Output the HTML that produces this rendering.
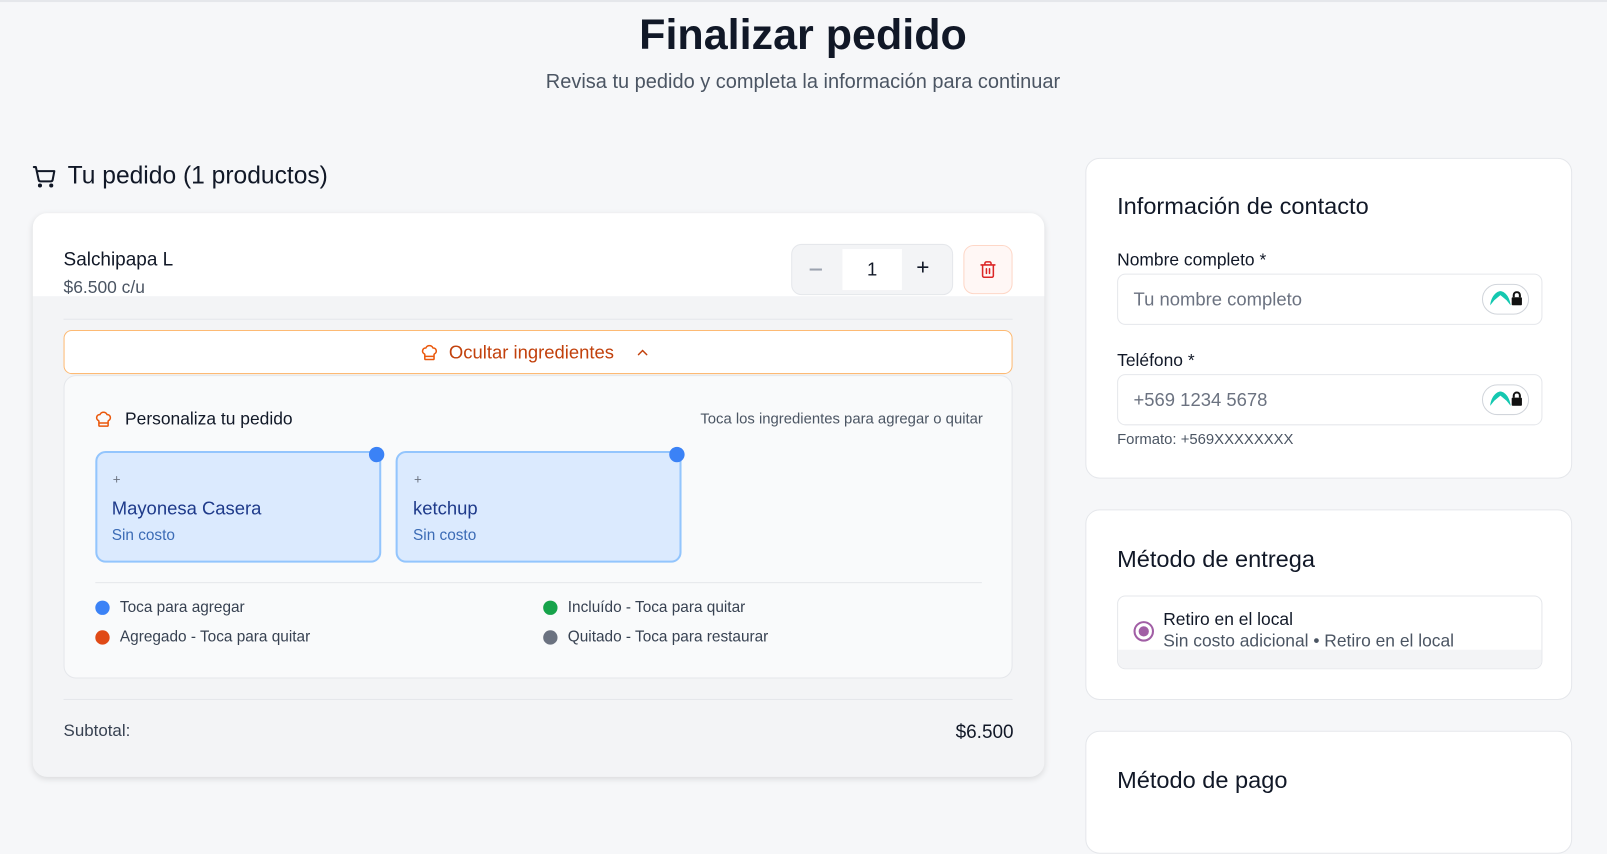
<!DOCTYPE html>
<html><head><meta charset="utf-8"><style>
*{box-sizing:border-box;margin:0;padding:0}
html,body{width:1607px;height:791px;overflow:hidden;background:#f6f7f9}
body{font-family:"Liberation Sans",sans-serif;color:#111827}
#w{position:absolute;left:0;top:0;width:1568px;height:772px;transform:scale(1.02487);transform-origin:0 0}
.a{position:absolute;white-space:nowrap}
.card{position:absolute;background:#fff;border:1px solid #e5e7eb;border-radius:14px}
</style></head><body><div id="w">
<div class="a" style="left:0;top:0;width:1568px;height:2px;background:#e5e7eb"></div>
<div class="a" style="left:0;width:1567px;top:10px;text-align:center;font-size:42px;font-weight:bold;color:#111827">Finalizar pedido</div>
<div class="a" style="left:0;width:1567px;top:69px;text-align:center;font-size:19.5px;color:#4b5563">Revisa tu pedido y completa la información para continuar</div>

<svg class="a" style="left:31px;top:160px" width="24" height="24" viewBox="0 0 24 24" fill="none" stroke="#111827" stroke-width="2" stroke-linecap="round" stroke-linejoin="round"><circle cx="8" cy="21" r="1"/><circle cx="19" cy="21" r="1"/><path d="M2 3h2l2.7 12.4a2 2 0 0 0 2 1.6h9.7a2 2 0 0 0 2-1.6L22 7H5.1"/></svg>
<div class="a" style="left:66px;top:158px;font-size:24px">Tu pedido (1 productos)</div>

<div class="a" style="left:32px;top:208px;width:987px;height:550px;border-radius:14px;background:#f3f4f6;box-shadow:0 2px 6px rgba(0,0,0,.12);overflow:hidden">
  <div class="a" style="left:0;top:0;width:987px;height:81px;background:#fff"></div>
  <div class="a" style="left:30px;top:34px;font-size:18.5px">Salchipapa L</div>
  <div class="a" style="left:30px;top:63px;font-size:17px;color:#4b5563">$6.500 c/u</div>
  <div class="a" style="left:740px;top:30px;width:158px;height:50px;border:1px solid #e5e7eb;border-radius:10px;background:#f3f4f6"></div>
  <div class="a" style="left:790px;top:35px;width:58px;height:40px;background:#fff"></div>
  <div class="a" style="left:758px;top:54px;width:12px;height:1.5px;background:#9ca3af"></div>
  <div class="a" style="left:790px;top:45px;width:58px;text-align:center;font-size:18px">1</div>
  <div class="a" style="left:862px;top:40px;font-size:22px;color:#111827">+</div>
  <div class="a" style="left:908px;top:31px;width:48px;height:48px;border:1px solid #fed7c7;border-radius:10px;background:#fff7f5"></div>
  <svg class="a" style="left:923px;top:46px" width="18" height="18" viewBox="0 0 24 24" fill="none" stroke="#dc2626" stroke-width="2" stroke-linecap="round"><path d="M3 6h18M19 6v14a2 2 0 0 1-2 2H7a2 2 0 0 1-2-2V6M8 6V4a2 2 0 0 1 2-2h4a2 2 0 0 1 2 2v2M10 11v6M14 11v6"/></svg>
  <div class="a" style="left:30px;top:103px;width:926px;height:1px;background:#e5e7eb"></div>
  <div class="a" style="left:30px;top:114px;width:926px;height:43px;border:1px solid #fdba74;border-radius:8px;background:#fff"></div>
  <svg class="a" style="left:378px;top:127px" width="18" height="18" viewBox="0 0 24 24" fill="none" stroke="#ea580c" stroke-width="2" stroke-linecap="round" stroke-linejoin="round"><path d="M17 21a1 1 0 0 0 1-1v-5.35c0-.46.31-.85.74-1.04a4 4 0 0 0-2.13-7.55 5 5 0 0 0-9.22 0 4 4 0 0 0-2.13 7.55c.43.19.74.58.74 1.04V20a1 1 0 0 0 1 1zM6 17h12"/></svg>
  <div class="a" style="left:406px;top:126px;font-size:18px;color:#c2410c">Ocultar ingredientes</div>
  <svg class="a" style="left:587px;top:128px" width="16" height="16" viewBox="0 0 24 24" fill="none" stroke="#c2410c" stroke-width="2.2" stroke-linecap="round"><path d="M6 15l6-6 6 6"/></svg>
  <div class="a" style="left:30px;top:158px;width:926px;height:296px;border:1px solid #e5e7eb;border-radius:12px;background:#f9fafb"></div>
  <svg class="a" style="left:60px;top:192px" width="18" height="18" viewBox="0 0 24 24" fill="none" stroke="#ea580c" stroke-width="2" stroke-linecap="round" stroke-linejoin="round"><path d="M17 21a1 1 0 0 0 1-1v-5.35c0-.46.31-.85.74-1.04a4 4 0 0 0-2.13-7.55 5 5 0 0 0-9.22 0 4 4 0 0 0-2.13 7.55c.43.19.74.58.74 1.04V20a1 1 0 0 0 1 1zM6 17h12"/></svg>
  <div class="a" style="left:90px;top:191px;font-size:17px">Personaliza tu pedido</div>
  <div class="a" style="right:60px;top:193px;font-size:14.5px;color:#4b5563">Toca los ingredientes para agregar o quitar</div>
  <div class="a" style="left:61px;top:232px;width:279px;height:109px;border:2px solid #93c5fd;border-radius:10px;background:#dbeafe"></div>
  <div class="a" style="left:328px;top:228px;width:15px;height:15px;border-radius:50%;background:#3b82f6"></div>
  <div class="a" style="left:78px;top:252px;font-size:13px;color:#6b7280">+</div>
  <div class="a" style="left:77px;top:278px;font-size:18px;color:#1e3a8a">Mayonesa Casera</div>
  <div class="a" style="left:77px;top:306px;font-size:15px;color:#3b6bb5">Sin costo</div>
  <div class="a" style="left:354px;top:232px;width:279px;height:109px;border:2px solid #93c5fd;border-radius:10px;background:#dbeafe"></div>
  <div class="a" style="left:621px;top:228px;width:15px;height:15px;border-radius:50%;background:#3b82f6"></div>
  <div class="a" style="left:372px;top:252px;font-size:13px;color:#6b7280">+</div>
  <div class="a" style="left:371px;top:278px;font-size:18px;color:#1e3a8a">ketchup</div>
  <div class="a" style="left:371px;top:306px;font-size:15px;color:#3b6bb5">Sin costo</div>
  <div class="a" style="left:61px;top:360px;width:865px;height:1px;background:#e5e7eb"></div>
  <div class="a" style="left:61px;top:378px;width:14px;height:14px;border-radius:50%;background:#3b82f6"></div>
  <div class="a" style="left:85px;top:376px;font-size:15px;color:#374151">Toca para agregar</div>
  <div class="a" style="left:61px;top:407px;width:14px;height:14px;border-radius:50%;background:#e04a16"></div>
  <div class="a" style="left:85px;top:405px;font-size:15px;color:#374151">Agregado - Toca para quitar</div>
  <div class="a" style="left:498px;top:378px;width:14px;height:14px;border-radius:50%;background:#16a34a"></div>
  <div class="a" style="left:522px;top:376px;font-size:15px;color:#374151">Incluído - Toca para quitar</div>
  <div class="a" style="left:498px;top:407px;width:14px;height:14px;border-radius:50%;background:#6b7280"></div>
  <div class="a" style="left:522px;top:405px;font-size:15px;color:#374151">Quitado - Toca para restaurar</div>
  <div class="a" style="left:30px;top:474px;width:926px;height:1px;background:#e5e7eb"></div>
  <div class="a" style="left:30px;top:496px;font-size:16.5px;color:#374151">Subtotal:</div>
  <div class="a" style="right:30px;top:495px;font-size:18.5px;color:#111827">$6.500</div>
</div>

<div class="card" style="left:1059px;top:154px;width:475px;height:313px">
  <div class="a" style="left:30px;top:33px;font-size:23px">Información de contacto</div>
  <div class="a" style="left:30px;top:89px;font-size:17px">Nombre completo *</div>
  <div class="a" style="left:30px;top:112px;width:415px;height:50px;border:1px solid #e5e7eb;border-radius:8px"></div>
  <div class="a" style="left:46px;top:127px;font-size:18px;color:#6b7280">Tu nombre completo</div>
  <div class="a" style="left:386px;top:122px;width:46px;height:30px;border:1px solid #d1d5db;border-radius:15px;background:#fff"></div>
  <svg class="a" style="left:393px;top:127px" width="22" height="18" viewBox="0 0 22 18"><path d="M1 16C2 6 8 2 11 2s9 4 10 14l-4-5-6-5-6 5z" fill="#14c8b0"/></svg>
  <svg class="a" style="left:414px;top:129px" width="12" height="14" viewBox="0 0 12 14"><path d="M3 6V4a3 3 0 0 1 6 0v2" stroke="#111" stroke-width="2" fill="none"/><rect x="1" y="6" width="10" height="8" rx="1" fill="#111"/></svg>
  <div class="a" style="left:30px;top:187px;font-size:17px">Teléfono *</div>
  <div class="a" style="left:30px;top:210px;width:415px;height:50px;border:1px solid #e5e7eb;border-radius:8px"></div>
  <div class="a" style="left:46px;top:225px;font-size:18px;color:#6b7280">+569 1234 5678</div>
  <div class="a" style="left:386px;top:220px;width:46px;height:30px;border:1px solid #d1d5db;border-radius:15px;background:#fff"></div>
  <svg class="a" style="left:393px;top:225px" width="22" height="18" viewBox="0 0 22 18"><path d="M1 16C2 6 8 2 11 2s9 4 10 14l-4-5-6-5-6 5z" fill="#14c8b0"/></svg>
  <svg class="a" style="left:414px;top:227px" width="12" height="14" viewBox="0 0 12 14"><path d="M3 6V4a3 3 0 0 1 6 0v2" stroke="#111" stroke-width="2" fill="none"/><rect x="1" y="6" width="10" height="8" rx="1" fill="#111"/></svg>
  <div class="a" style="left:30px;top:266px;font-size:14.5px;color:#4b5563">Formato: +569XXXXXXXX</div>
</div>

<div class="card" style="left:1059px;top:497px;width:475px;height:186px">
  <div class="a" style="left:30px;top:34px;font-size:23px">Método de entrega</div>
  <div class="a" style="left:30px;top:83px;width:415px;height:72px;border:1px solid #e5e7eb;border-radius:8px;background:#fff;overflow:hidden">
    <div class="a" style="left:0;top:52px;width:415px;height:20px;background:#f3f4f6"></div>
    <div class="a" style="left:15px;top:24px;width:20px;height:20px;border:2px solid #a15ea5;border-radius:50%;background:#fff"></div>
    <div class="a" style="left:20px;top:29px;width:10px;height:10px;border-radius:50%;background:#a15ea5"></div>
    <div class="a" style="left:44px;top:13px;font-size:17px">Retiro en el local</div>
    <div class="a" style="left:44px;top:34px;font-size:17px;color:#4b5563">Sin costo adicional • Retiro en el local</div>
  </div>
</div>

<div class="card" style="left:1059px;top:713px;width:475px;height:120px">
  <div class="a" style="left:30px;top:34px;font-size:23px">Método de pago</div>
</div>
</div></body></html>
